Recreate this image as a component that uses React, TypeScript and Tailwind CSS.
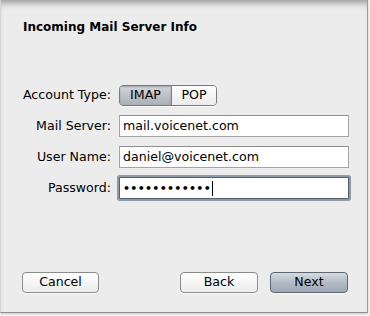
import React from 'react';

const font = { fontFamily: '"DejaVu Sans", "Liberation Sans", sans-serif' };

const Field: React.FC<{ label: string; children: React.ReactNode }> = ({ label, children }) => (
  <div className="flex items-center h-[22px]">
    <div className="w-[111px] text-right pr-[1px] whitespace-nowrap">{label}</div>
    <div className="ml-[7px]">{children}</div>
  </div>
);

const TextBox: React.FC<{ value: string }> = ({ value }) => (
  <div className="w-[230px] h-[22px] bg-white border border-[#a4a4a4] border-t-[#8e8e8e] flex items-center pl-[3px] leading-none">
    {value}
  </div>
);

const App: React.FC = () => {
  return (
    <div className="w-[370px] h-[316px] bg-[#f3f3f3] overflow-hidden text-[12.6px] text-black" style={font}>
      <div className="w-[368px] h-[313px] bg-[#ececec] border-r border-b border-l border-r-[#9c9c9c] border-b-[#8a8a8a] border-l-[#d6d6d6] shadow-[inset_0_7px_6px_-4px_rgba(0,0,0,0.35),0_1px_2px_rgba(0,0,0,0.15)] flex flex-col">
        <h1 className="font-bold text-[12px] ml-[22px] mt-[20px] leading-[15px]">Incoming Mail Server Info</h1>

        <div className="flex flex-col gap-[9px] mt-[49px]">
          <Field label="Account Type:">
            <div className="flex h-[21px] w-[98px] rounded-[4px] border border-[#7a7a7a] overflow-hidden shadow-[0_1px_0_rgba(255,255,255,0.8)]">
              <div className="w-[52px] flex items-center justify-center bg-gradient-to-b from-[#d3d6da] to-[#aab0b6] border-r border-[#7f7f7f] shadow-[inset_0_1px_2px_rgba(0,0,0,0.25)]">
                IMAP
              </div>
              <div className="flex-1 flex items-center justify-center bg-gradient-to-b from-[#ffffff] to-[#ebebeb]">
                POP
              </div>
            </div>
          </Field>
          <Field label="Mail Server:">
            <TextBox value="mail.voicenet.com" />
          </Field>
          <Field label="User Name:">
            <TextBox value="daniel@voicenet.com" />
          </Field>
          <Field label="Password:">
            <div className="w-[230px] h-[22px] bg-white border border-[#56616c] shadow-[0_0_0_2px_rgba(110,125,140,0.75)] rounded-[1px] flex items-center pl-[3px]">
              <span className="tracking-[0.3px] text-[11px] leading-none font-bold">••••••••••••</span>
              <span className="w-px h-[15px] bg-black ml-[1px]" />
            </div>
          </Field>
        </div>

        <div className="flex mt-auto mb-[19px] pl-[21px] pr-[19px]">
          <button className="w-[77px] h-[21px] rounded-[4px] border border-[#8c8c8c] bg-gradient-to-b from-[#ffffff] to-[#ececec] shadow-[0_1px_0_rgba(255,255,255,0.8)] leading-none">
            Cancel
          </button>
          <button className="ml-auto w-[78px] h-[21px] rounded-[4px] border border-[#8c8c8c] bg-gradient-to-b from-[#ffffff] to-[#ececec] shadow-[0_1px_0_rgba(255,255,255,0.8)] leading-none">
            Back
          </button>
          <button className="ml-[12px] w-[78px] h-[21px] rounded-[4px] border border-[#5e6670] bg-gradient-to-b from-[#d4dae0] via-[#b3bcc5] to-[#9ea8b3] shadow-[0_1px_0_rgba(255,255,255,0.8)] leading-none">
            Next
          </button>
        </div>
      </div>
    </div>
  );
};

export default App;
